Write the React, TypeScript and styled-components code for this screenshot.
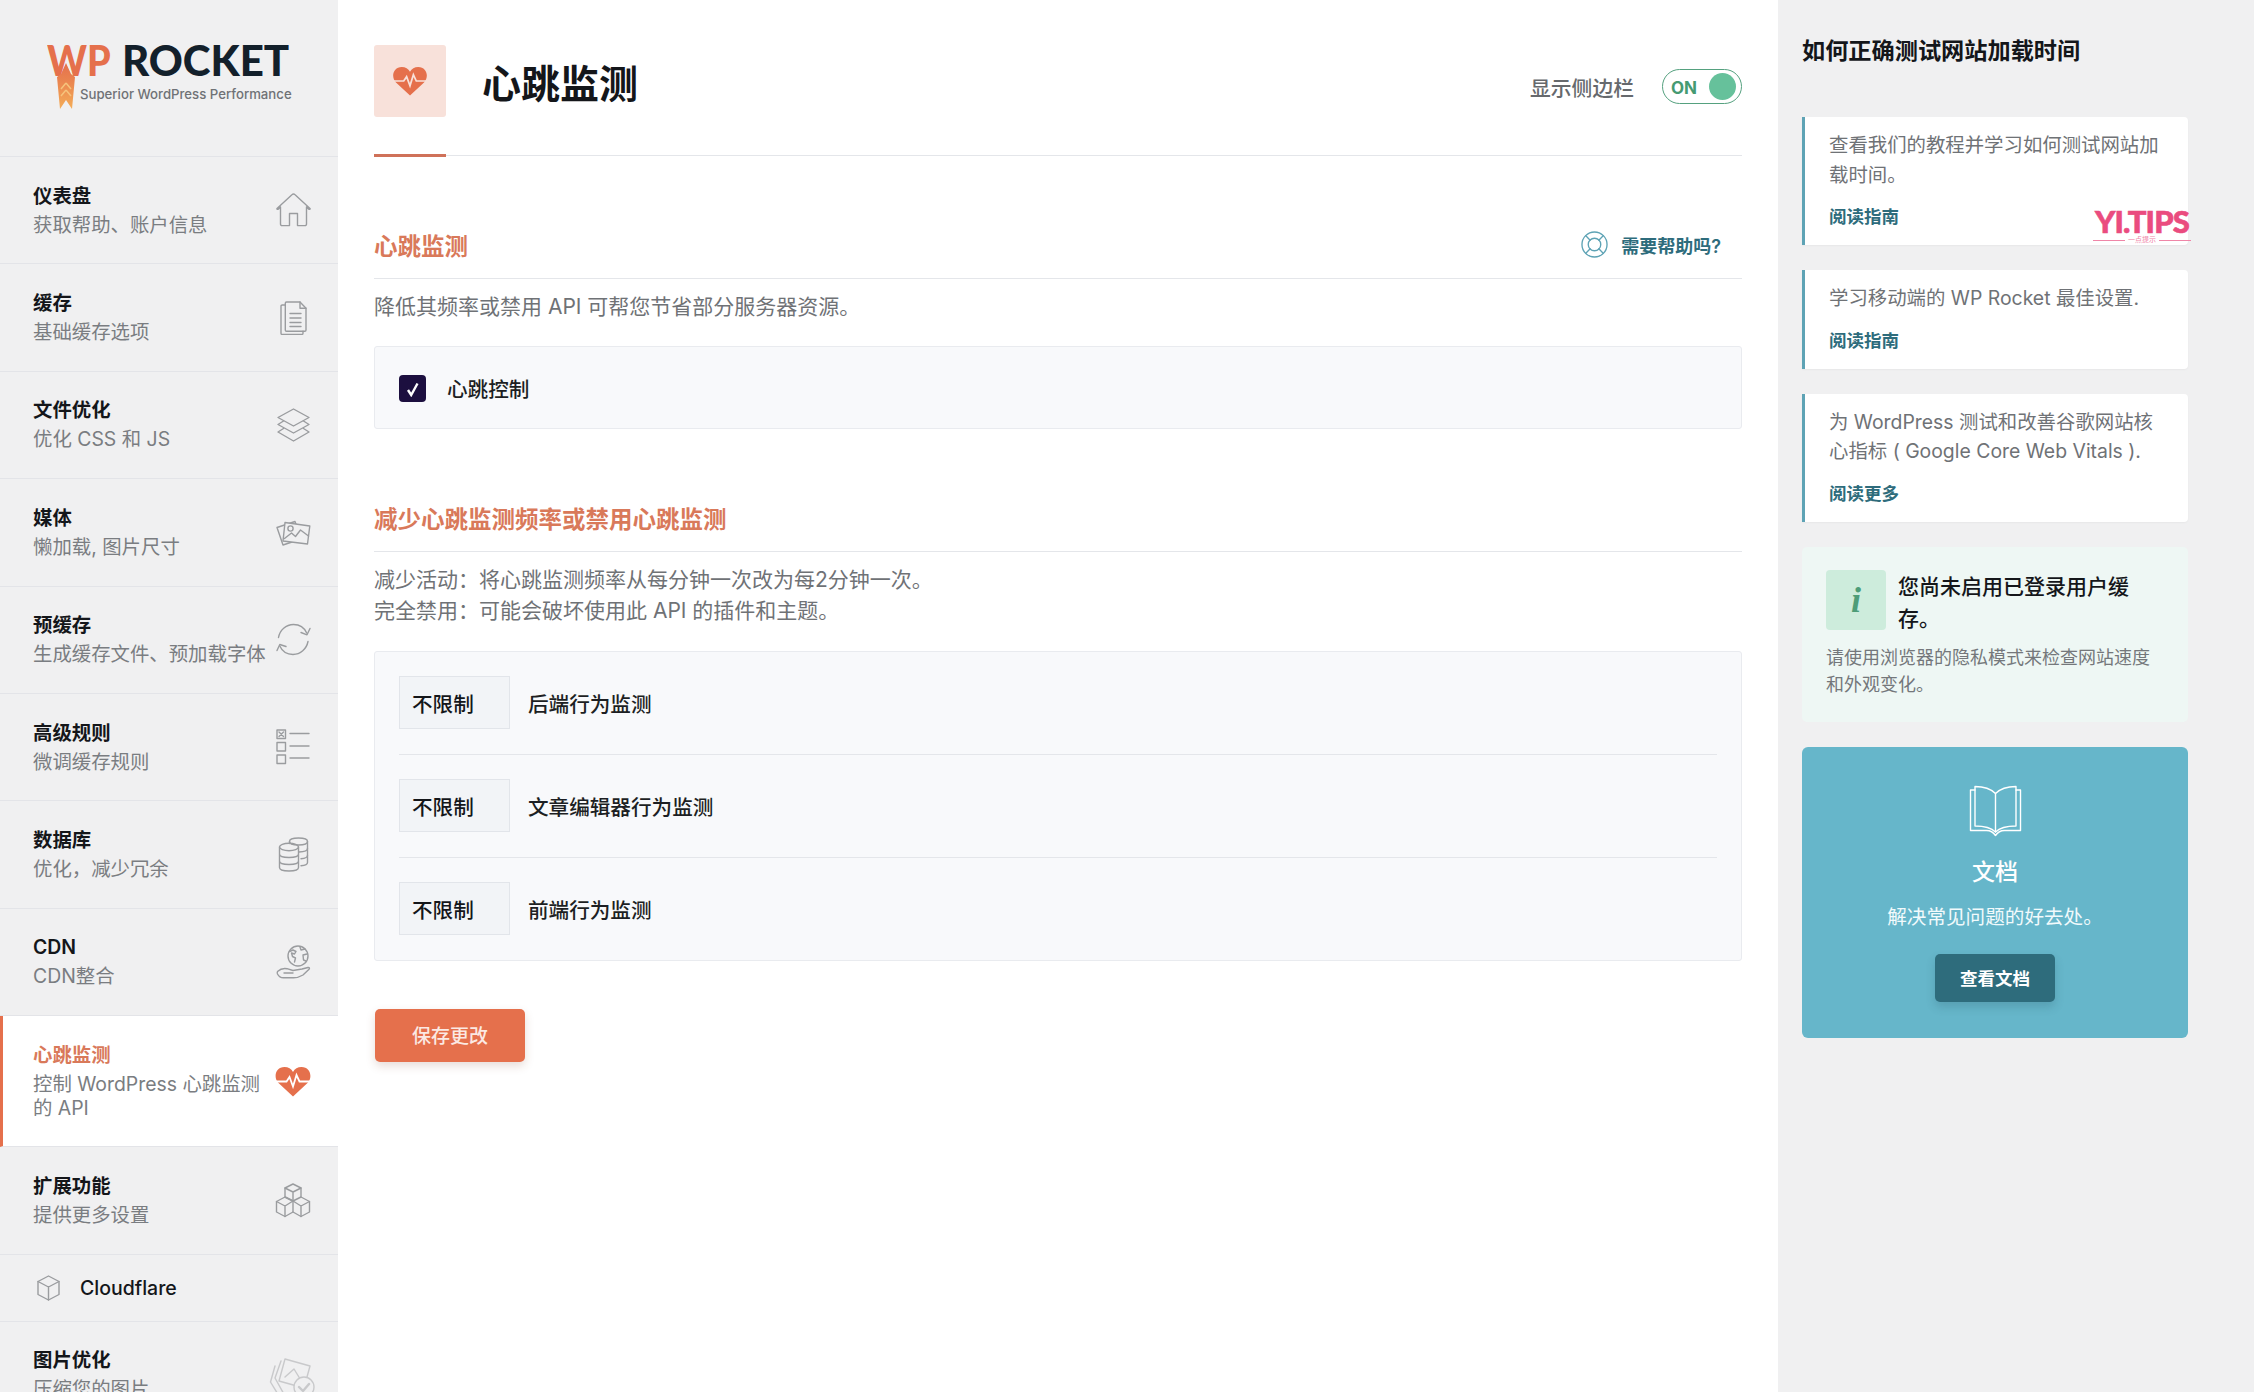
import React from "react";
import styled, { createGlobalStyle } from "styled-components";

const FONT = `Inter, "Noto Sans CJK SC", sans-serif`;
const ORANGE = "#e5704c";
const HEADING = "#d9795a";
const TEAL = "#2e6c7c";
const TEAL_LIGHT = "#5ea3b5";

const GlobalStyle = createGlobalStyle`
    html, body {
        margin: 0;
        padding: 0;
        background: #ffffff;
    }
    body {
        font-family: ${FONT};
        color: #14161a;
    }
    * {
        box-sizing: border-box;
    }
`;

const Svg = styled.svg`
    display: block;
    flex-shrink: 0;
    fill: none;
    stroke: currentColor;
    stroke-width: 1.4;
    stroke-linecap: round;
    stroke-linejoin: round;
`;

const HomeIcon = () => (
    <Svg width="35" height="34" viewBox="0 0 35 34">
        <path d="M1 15.5 16.2 1.6a1.8 1.8 0 0 1 2.6 0L34 15.5c.6.8-.8 1-1.5.4L30.5 14v17a1.6 1.6 0 0 1-1.6 1.6H21.5V20.5h-8v12.1H6.100a1.600 1.600 0 0 1-1.600-1.600V14l-2 1.900c-.7.6-2 .4-1.500-.4Z" />
    </Svg>
);

const FilesIcon = () => (
    <Svg width="27" height="34" viewBox="0 0 27 34">
        <path d="M6.500 1H20l6 6.200V29a1.200 1.200 0 0 1-1.200 1.200H6.500A1.200 1.200 0 0 1 5.300 29V2.200A1.200 1.200 0 0 1 6.500 1Z" />
        <path d="M20 1v6.200h6" />
        <path d="M5.300 4H2.200A1.200 1.200 0 0 0 1 5.200v27A1.200 1.200 0 0 0 2.200 33.400h19.600a1.200 1.200 0 0 0 1.200-1.200v-2" />
        <path d="M10 12.500h11M10 17h11M10 21.500h11M10 25.500h11" />
    </Svg>
);

const LayersIcon = () => (
    <Svg width="33" height="34" viewBox="0 0 33 34">
        <path d="M16.500 1 32 9.500 16.500 18 1 9.500Z" />
        <path d="M6.500 13 1 16.500 16.500 25 32 16.500 26.500 13" />
        <path d="M6.500 20.500 1 24 16.500 33 32 24 26.500 20.500" />
    </Svg>
);

const PhotosIcon = () => (
    <Svg width="35" height="27" viewBox="0 0 35 27">
        <path d="M1 8.500 19 2.500 25 20 7 26Z" />
        <path d="M9 3.500 33.800 7l-2.300 18L7 22Z" fill="#f0f0f1" />
        <circle cx="14.500" cy="9.500" r="2.600" />
        <path d="M8.500 19.500 15.500 14l4 3.500 5-6.500 8 6" />
    </Svg>
);

const SyncIcon = () => (
    <Svg width="35" height="33" viewBox="0 0 35 33">
        <path d="M2.500 14.500C3.800 7 10 1.500 17.500 1.500c5.800 0 10.800 3.200 13.200 8.500" />
        <path d="M34 5.500 31 11.800 25 9.500" />
        <path d="M32 18.500C30.500 26 24.500 31.500 17 31.500c-5.800 0-10.800-3.200-13.200-8.500" />
        <path d="M1 27.500 3.800 21.500l6.200 2" />
    </Svg>
);

const ChecklistIcon = () => (
    <Svg width="34" height="36" viewBox="0 0 34 36">
        <rect x="1" y="1" width="8.500" height="8.500" />
        <path d="M3 3 7.500 7.500M7.500 3 3 7.500" />
        <rect x="1" y="13.500" width="8.500" height="8.500" />
        <rect x="1" y="26" width="8.500" height="8.500" />
        <path d="M14 4.500h19M14 17h19M14 29h19" />
    </Svg>
);

const DatabaseIcon = () => (
    <Svg width="31" height="35" viewBox="0 0 31 35">
        <path d="M11.500 6.500V4.500C11.500 2.300 15.500 1 20.500 1s9 1.300 9 3.500v21c0 1.800-3 3-6.500 3.300" />
        <path d="M11.500 4.500c0 2.200 4 3.500 9 3.500s9-1.300 9-3.500M21 15c4.500-.1 8.500-1.400 8.500-3.500M23 21.800c3.800-.4 6.500-1.600 6.500-3.300" />
        <ellipse cx="11" cy="10" rx="9.500" ry="3.800" />
        <path d="M1.500 10v20.500c0 2.100 4.200 3.500 9.500 3.500s9.500-1.400 9.500-3.500V10M1.500 17c0 2.100 4.200 3.500 9.500 3.500s9.500-1.400 9.500-3.500M1.500 24c0 2.100 4.200 3.500 9.500 3.500s9.500-1.400 9.500-3.500" />
    </Svg>
);

const GlobeHandIcon = () => (
    <Svg width="35" height="34" viewBox="0 0 35 34">
        <circle cx="22" cy="11" r="10" />
        <path d="M13.500 6.500 17 5l3 1.500-1.500 2.500-3-1 1 3.500 3 1.500-1 4" />
        <path d="M24 2l1 3 4-1M31 9l-4 1 .5 5 2.500 1" />
        <path d="M1.500 26.500c3-2.800 6-3.500 9.500-2.800l6 1.800 9-1.500 6-1.500c1.500-.2 2 1 .8 2L27 30c-3 1.800-5 2.800-9.500 2.800H7.500C5 32.800 2.500 31 1.500 29c-.4-1-.4-1.800 0-2.500Z" />
        <path d="M8 28h9" />
    </Svg>
);

const PulseHeart = ({ gap, w, h }: { gap: string; w: number; h: number }) => (
    <svg width={w} height={h} viewBox="0 0 36 31" style={{ display: "block" }}>
        <path
            d="M18 30.500 3.500 17C-2 11.500.5 1 9.500 1c3.800 0 6.800 1.800 8.500 5 1.700-3.200 4.700-5 8.500-5 9 0 11.500 10.500 6 16Z"
            fill={ORANGE}
        />
        <path
            d="M0 15.500h11.500l3-4.500 3.500 9.500 3.500-11.500 3 6.500H36"
            fill="none"
            stroke={gap}
            strokeWidth="1.800"
        />
    </svg>
);

const CubesIcon = () => (
    <Svg width="36" height="35" viewBox="0 0 36 35">
        <path d="M18 1 26 5v9l-8 4-8-4V5Z" />
        <path d="M10 5l8 4 8-4M18 9v9" />
        <path d="M10 14 1.500 18.500v10.500l8.500 4.500 8-4.500V18L10 14Z" />
        <path d="M1.500 18.500l8.500 4.500 8-5M10 23v10.500" />
        <path d="M26 14l8.500 4.500v10.500L26 33.500 18 29" />
        <path d="M18 18l8 5 8.500-4.500M26 23v10.500" />
    </Svg>
);

const CubeIcon = () => (
    <Svg width="23" height="26" viewBox="0 0 23 26">
        <path d="M11.500 1 22 6.500v13L11.500 25 1 19.500v-13Z" />
        <path d="M1 6.500 11.500 12 22 6.500M11.500 12v13" />
    </Svg>
);

const ImagesCheckIcon = () => (
    <Svg width="46" height="40" viewBox="0 0 46 40">
        <path d="M6 8 1.500 24 10 38" />
        <path d="M12 3 6 20l10 18" />
        <path d="M16 1 41 8l-6 22-25-7Z" fill="#f0f0f1" />
        <path d="M16 19l9-8 8 13" />
        <circle cx="35" cy="29" r="10" fill="#f0f0f1" />
        <path d="M30 29l4 4 6-7" strokeWidth="2.400" />
    </Svg>
);

const LifebuoyIcon = () => (
    <Svg width="27" height="27" viewBox="0 0 28 28" strokeWidth="1.1">
        <circle cx="14" cy="14" r="13" />
        <circle cx="14" cy="14" r="6.500" />
        <path d="M5 5l4.500 4.500M23 5l-4.500 4.500M5 23l4.500-4.500M23 23l-4.500-4.500" />
    </Svg>
);

const BookIcon = () => (
    <Svg width="53" height="52" viewBox="0 0 53 52">
        <path d="M26.500 8.500C22 4 14 1.500 6 1.500v39.500c8 0 16 1.500 20.500 6 4.500-4.500 12.500-6 20.500-6V1.500c-8 0-16 2.500-20.500 7Z" />
        <path d="M26.500 8.500V47" />
        <path d="M6 5H1.500v40.500h16c4 0 7 2 9 5 2-3 5-5 9-5h16V5H47" />
    </Svg>
);

const RocketFlame = () => (
    <svg width="18" height="47" viewBox="0 0 18 47" style={{ display: "block" }}>
        <defs>
            <linearGradient id="flame" x1="0" y1="0" x2="0" y2="1">
                <stop offset="0" stopColor="#e5704c" />
                <stop offset="0.35" stopColor="#e9824f" />
                <stop offset="1" stopColor="#f4ad58" />
            </linearGradient>
        </defs>
        <path d="M9 0 14 11 18 14 15 46 9 37 3 46 0 14 4 11Z" fill="url(#flame)" />
        <path d="M9 20 14 26M9 20 4 26M9 27 14 33M9 27 4 33" stroke="#f6c37c" strokeWidth="1.500" fill="none" />
    </svg>
);

const CheckMark = () => (
    <svg width="16" height="16" viewBox="0 0 16 16">
        <path d="M3 9 6.200 14 12.500 2.500" fill="none" stroke="#ffffff" strokeWidth="2.400" />
    </svg>
);

type NavEntry = {
    title: string;
    desc: string;
    icon: React.ReactNode;
    active?: boolean;
};

const navEntries: NavEntry[] = [
    { title: "仪表盘", desc: "获取帮助、账户信息", icon: <HomeIcon /> },
    { title: "缓存", desc: "基础缓存选项", icon: <FilesIcon /> },
    { title: "文件优化", desc: "优化 CSS 和 JS", icon: <LayersIcon /> },
    { title: "媒体", desc: "懒加载, 图片尺寸", icon: <PhotosIcon /> },
    { title: "预缓存", desc: "生成缓存文件、预加载字体", icon: <SyncIcon /> },
    { title: "高级规则", desc: "微调缓存规则", icon: <ChecklistIcon /> },
    { title: "数据库", desc: "优化，减少冗余", icon: <DatabaseIcon /> },
    { title: "CDN", desc: "CDN整合", icon: <GlobeHandIcon /> },
    {
        title: "心跳监测",
        desc: "控制 WordPress 心跳监测的 API",
        icon: <PulseHeart gap="#ffffff" w={36} h={31} />,
        active: true,
    },
    { title: "扩展功能", desc: "提供更多设置", icon: <CubesIcon /> },
];

const guideCards = [
    { text: "查看我们的教程并学习如何测试网站加载时间。", link: "阅读指南", mark: true },
    { text: "学习移动端的 WP Rocket 最佳设置.", link: "阅读指南" },
    { text: "为 WordPress 测试和改善谷歌网站核心指标 ( Google Core Web Vitals ).", link: "阅读更多" },
];

const limits = ["后端行为监测", "文章编辑器行为监测", "前端行为监测"];

export default function App() {
    return (
        <Page>
            <GlobalStyle />
            <Sidebar>
                <Logo>
                    <LogoWords>
                        <LogoWp>WP</LogoWp>
                        <LogoRocket>ROCKET</LogoRocket>
                    </LogoWords>
                    <LogoTag>Superior WordPress Performance</LogoTag>
                    <LogoFlame>
                        <RocketFlame />
                    </LogoFlame>
                </Logo>
                {navEntries.map((entry) => (
                    <NavRow key={entry.title} $active={entry.active}>
                        <NavText>
                            <NavTitle $active={entry.active}>{entry.title}</NavTitle>
                            <NavDesc>{entry.desc}</NavDesc>
                        </NavText>
                        <NavIcon>{entry.icon}</NavIcon>
                    </NavRow>
                ))}
                <SubRow>
                    <SubIcon>
                        <CubeIcon />
                    </SubIcon>
                    <SubLabel>Cloudflare</SubLabel>
                </SubRow>
                <NavRow>
                    <NavText>
                        <NavTitle>图片优化</NavTitle>
                        <NavDesc>压缩您的图片</NavDesc>
                    </NavText>
                    <FadedIcon>
                        <ImagesCheckIcon />
                    </FadedIcon>
                </NavRow>
            </Sidebar>

            <Main>
                <Header>
                    <HeaderBadge>
                        <PulseHeart gap="#f8e1da" w={36} h={30} />
                    </HeaderBadge>
                    <PageTitle>心跳监测</PageTitle>
                    <SidebarSwitch>
                        <SwitchLabel>显示侧边栏</SwitchLabel>
                        <Toggle>
                            <ToggleText>ON</ToggleText>
                            <ToggleKnob />
                        </Toggle>
                    </SidebarSwitch>
                </Header>

                <Section>
                    <SectionHead>
                        <SectionTitle>心跳监测</SectionTitle>
                        <HelpLink>
                            <HelpIcon>
                                <LifebuoyIcon />
                            </HelpIcon>
                            需要帮助吗?
                        </HelpLink>
                    </SectionHead>
                    <SectionDesc>
                        <div>降低其频率或禁用 API 可帮您节省部分服务器资源。</div>
                    </SectionDesc>
                    <CheckPanel>
                        <CheckBox>
                            <CheckMark />
                        </CheckBox>
                        <FieldLabel>心跳控制</FieldLabel>
                    </CheckPanel>
                </Section>

                <Section>
                    <SectionHead>
                        <SectionTitle>减少心跳监测频率或禁用心跳监测</SectionTitle>
                    </SectionHead>
                    <SectionDesc>
                        <div>减少活动：将心跳监测频率从每分钟一次改为每2分钟一次。</div>
                        <div>完全禁用：可能会破坏使用此 API 的插件和主题。</div>
                    </SectionDesc>
                    <LimitPanel>
                        {limits.map((label) => (
                            <LimitRow key={label}>
                                <FakeSelect>不限制</FakeSelect>
                                <FieldLabel>{label}</FieldLabel>
                            </LimitRow>
                        ))}
                    </LimitPanel>
                </Section>

                <SaveButton>保存更改</SaveButton>
            </Main>

            <Aside>
                <AsideTitle>如何正确测试网站加载时间</AsideTitle>
                <AsideStack>
                    {guideCards.map((card) => (
                        <GuideCard key={card.text}>
                            <GuideText>{card.text}</GuideText>
                            <GuideLink>{card.link}</GuideLink>
                            {card.mark ? (
                                <Watermark>
                                    <WatermarkName>YI.TIPS</WatermarkName>
                                    <WatermarkSub>一点提示</WatermarkSub>
                                </Watermark>
                            ) : null}
                        </GuideCard>
                    ))}
                    <InfoCard>
                        <InfoHead>
                            <InfoBadge>i</InfoBadge>
                            <InfoTitle>您尚未启用已登录用户缓存。</InfoTitle>
                        </InfoHead>
                        <InfoText>请使用浏览器的隐私模式来检查网站速度和外观变化。</InfoText>
                    </InfoCard>
                    <DocCard>
                        <BookIcon />
                        <DocTitle>文档</DocTitle>
                        <DocText>解决常见问题的好去处。</DocText>
                        <DocButton>查看文档</DocButton>
                    </DocCard>
                </AsideStack>
            </Aside>
        </Page>
    );
}

const Page = styled.div`
    display: flex;
    height: 1392px;
    overflow: hidden;
    background: #ffffff;
`;

const Sidebar = styled.nav`
    width: 338px;
    flex-shrink: 0;
    background: #f0f0f1;
    color: #9a9c9f;
`;

const Logo = styled.div`
    position: relative;
    height: 157px;
    padding: 35px 0 0 47px;
    border-bottom: 1px solid #e3e4e8;
`;

const LogoWords = styled.div`
    display: flex;
    font-family: Lato, Inter, sans-serif;
    font-size: 42px;
    font-weight: 900;
    line-height: 50px;
`;

const LogoWp = styled.span`
    width: 75px;
    transform: scaleX(0.9);
    transform-origin: left center;
    color: ${ORANGE};
`;

const LogoRocket = styled.span`
    color: #13202b;
`;

const LogoTag = styled.div`
    margin: 1px 0 0 33px;
    font-family: Inter, sans-serif;
    font-size: 13.2px;
    font-weight: 500;
    line-height: 16px;
    white-space: nowrap;
    color: #6f7276;
`;

const LogoFlame = styled.div`
    position: absolute;
    left: 57px;
    top: 63px;
`;

const NavRow = styled.div<{ $active?: boolean }>`
    display: flex;
    align-items: center;
    justify-content: space-between;
    padding: 26.7px 27px 26.7px ${(p) => (p.$active ? "30px" : "33px")};
    border-bottom: 1px solid #e3e4e8;
    border-left: ${(p) => (p.$active ? `3px solid ${ORANGE}` : "0")};
    background: ${(p) => (p.$active ? "#ffffff" : "transparent")};
`;

const NavText = styled.div`
    width: 236px;
    flex-shrink: 0;
`;

const NavTitle = styled.div<{ $active?: boolean }>`
    font-size: 19.4px;
    font-weight: 600;
    line-height: 24px;
    margin-bottom: 5px;
    color: ${(p) => (p.$active ? HEADING : "#14161a")};
`;

const NavDesc = styled.div`
    font-size: 19.4px;
    line-height: 24px;
    color: #7a7d81;
`;

const NavIcon = styled.div`
    width: 36px;
    display: flex;
    justify-content: center;
`;

const FadedIcon = styled.div`
    align-self: flex-start;
    width: 46px;
    height: 0;
    margin-top: 10px;
    opacity: 0.45;
`;

const SubRow = styled.div`
    display: flex;
    align-items: center;
    height: 67px;
    padding-left: 37px;
    border-bottom: 1px solid #e3e4e8;
`;

const SubIcon = styled.div`
    width: 43px;
`;

const SubLabel = styled.span`
    font-size: 19.5px;
    font-weight: 500;
    color: #14161a;
`;

const Main = styled.main`
    width: 1440px;
    flex-shrink: 0;
    padding: 45px 36px 0;
`;

const Header = styled.header`
    position: relative;
    display: flex;
    align-items: center;
    padding-bottom: 38px;
    border-bottom: 1px solid #e4e6ea;

    &::after {
        content: "";
        position: absolute;
        left: 0;
        bottom: -2px;
        width: 72px;
        height: 3px;
        background: #cf7159;
    }
`;

const HeaderBadge = styled.div`
    width: 72px;
    height: 72px;
    display: flex;
    align-items: center;
    justify-content: center;
    background: #f8e1da;
    border-radius: 3px;
`;

const PageTitle = styled.h1`
    margin: 5px 0 0 36px;
    font-size: 39px;
    font-weight: 600;
    line-height: 48px;
    color: #14161a;
`;

const SidebarSwitch = styled.div`
    display: flex;
    align-items: center;
    gap: 28px;
    margin-left: auto;
    margin-top: 11px;
`;

const SwitchLabel = styled.span`
    font-size: 20.8px;
    font-weight: 500;
    color: #66696d;
`;

const Toggle = styled.div`
    display: flex;
    align-items: center;
    justify-content: space-between;
    width: 80px;
    height: 35px;
    padding: 0 5px 0 8px;
    border: 1px solid #55a17f;
    border-radius: 18px;
`;

const ToggleText = styled.span`
    margin-top: 2px;
    font-size: 17px;
    font-weight: 700;
    color: #459a72;
`;

const ToggleKnob = styled.span`
    width: 27px;
    height: 27px;
    border-radius: 50%;
    background: #66c19b;
`;

const Section = styled.section`
    margin-top: 75px;
`;

const SectionHead = styled.div`
    display: flex;
    align-items: center;
    justify-content: space-between;
    padding-bottom: 15px;
    border-bottom: 1px solid #e4e6ea;
`;

const SectionTitle = styled.h2`
    margin: 0;
    font-size: 23.5px;
    font-weight: 600;
    line-height: 32px;
    color: ${HEADING};
`;

const HelpLink = styled.div`
    display: flex;
    align-items: center;
    gap: 13px;
    padding-right: 21px;
    margin-top: -5px;
    font-size: 18px;
    font-weight: 600;
    color: ${TEAL};
`;

const HelpIcon = styled.span`
    color: ${TEAL_LIGHT};
`;

const SectionDesc = styled.div`
    margin-top: 12px;
    font-size: 21px;
    line-height: 31px;
    color: #6f7276;
`;

const Panel = styled.div`
    background: #f8f9fb;
    border: 1px solid #e9ebef;
    border-radius: 3px;
`;

const CheckPanel = styled(Panel)`
    display: flex;
    align-items: center;
    gap: 21px;
    height: 83px;
    margin-top: 24px;
    padding-left: 24px;
`;

const CheckBox = styled.div`
    width: 27px;
    height: 27px;
    display: flex;
    align-items: center;
    justify-content: center;
    margin-top: 2px;
    background: #1c0f3f;
    border-radius: 4px;
`;

const FieldLabel = styled.span`
    font-size: 20.6px;
    font-weight: 500;
    color: #1d1f23;
`;

const LimitPanel = styled(Panel)`
    margin-top: 24.5px;
    padding: 0 24px;
`;

const LimitRow = styled.div`
    display: flex;
    align-items: center;
    gap: 18px;
    padding: 24.5px 0;
    border-bottom: 1px solid #e4e6ea;

    &:last-child {
        border-bottom: 0;
    }
`;

const FakeSelect = styled.div`
    width: 111px;
    height: 53px;
    display: flex;
    align-items: center;
    padding-left: 12px;
    font-size: 20.6px;
    font-weight: 500;
    color: #14161a;
    background: #f2f4f7;
    border: 1px solid #e2e5ea;
`;

const SaveButton = styled.button`
    display: block;
    width: 150px;
    height: 53px;
    margin: 48.5px 0 0 1px;
    padding: 0 0 2px;
    font-family: ${FONT};
    font-size: 19px;
    font-weight: 500;
    color: #fbe9e3;
    background: ${ORANGE};
    border: 0;
    border-radius: 5px;
    box-shadow: 0 4px 10px rgba(120, 60, 40, 0.18);
`;

const Aside = styled.aside`
    flex: 1;
    padding: 35px 0 0 24px;
    background: #f0f0f1;
`;

const AsideTitle = styled.h3`
    margin: 0;
    font-size: 23.2px;
    font-weight: 600;
    line-height: 32px;
    color: #14161a;
`;

const AsideStack = styled.div`
    display: flex;
    flex-direction: column;
    gap: 25px;
    width: 386px;
    margin-top: 50px;
`;

const GuideCard = styled.div`
    position: relative;
    padding: 14px 20px 16px 24px;
    background: #ffffff;
    border-left: 3px solid ${TEAL_LIGHT};
    border-radius: 0 4px 4px 0;
    box-shadow: 0 1px 2px rgba(0, 0, 0, 0.04);
`;

const GuideText = styled.div`
    font-size: 19.4px;
    line-height: 29.6px;
    color: #6f7276;
`;

const GuideLink = styled.div`
    margin-top: 15px;
    font-size: 17.5px;
    font-weight: 600;
    line-height: 24px;
    color: ${TEAL};
`;

const Watermark = styled.div`
    position: absolute;
    right: -3px;
    top: 90px;
    width: 98px;
    text-align: center;
`;

const WatermarkName = styled.div`
    font-family: Lato, Inter, sans-serif;
    font-size: 31px;
    font-weight: 900;
    line-height: 28px;
    letter-spacing: -0.8px;
    white-space: nowrap;
    -webkit-text-stroke: 0.6px #ea4c7f;
    color: #ea4c7f;
`;

const WatermarkSub = styled.div`
    display: flex;
    align-items: center;
    gap: 3px;
    font-size: 7px;
    line-height: 10px;
    white-space: nowrap;
    color: #ef86a8;

    &::before,
    &::after {
        content: "";
        flex: 1;
        height: 1px;
        background: #ef86a8;
    }
`;

const InfoCard = styled.div`
    padding: 23px 24px 24px;
    background: #eef7f4;
    border-radius: 5px;
`;

const InfoHead = styled.div`
    display: flex;
    align-items: flex-start;
    gap: 12px;
`;

const InfoBadge = styled.div`
    width: 60px;
    height: 60px;
    flex-shrink: 0;
    display: flex;
    align-items: center;
    justify-content: center;
    font-family: "Liberation Serif", serif;
    font-size: 36px;
    font-style: italic;
    font-weight: 700;
    color: #4d9d78;
    background: #cdecdc;
    border-radius: 4px;
`;

const InfoTitle = styled.div`
    margin-top: 1px;
    font-size: 21px;
    font-weight: 500;
    line-height: 32.5px;
    color: #14161a;
`;

const InfoText = styled.div`
    margin-top: 8px;
    font-size: 18px;
    line-height: 27px;
    color: #74777b;
`;

const DocCard = styled.div`
    display: flex;
    flex-direction: column;
    align-items: center;
    height: 291px;
    padding-top: 38px;
    color: #ffffff;
    background: #66b6ca;
    border-radius: 6px;
`;

const DocTitle = styled.div`
    margin-top: 19px;
    font-size: 23px;
    font-weight: 500;
    line-height: 32px;
`;

const DocText = styled.div`
    margin-top: 15px;
    font-size: 19.6px;
    line-height: 28px;
    color: #f1fafc;
`;

const DocButton = styled.div`
    width: 120px;
    height: 48px;
    display: flex;
    align-items: center;
    justify-content: center;
    margin-top: 23px;
    font-size: 17.5px;
    font-weight: 600;
    background: ${TEAL};
    border-radius: 5px;
    box-shadow: 0 5px 10px rgba(30, 70, 85, 0.2);
`;
